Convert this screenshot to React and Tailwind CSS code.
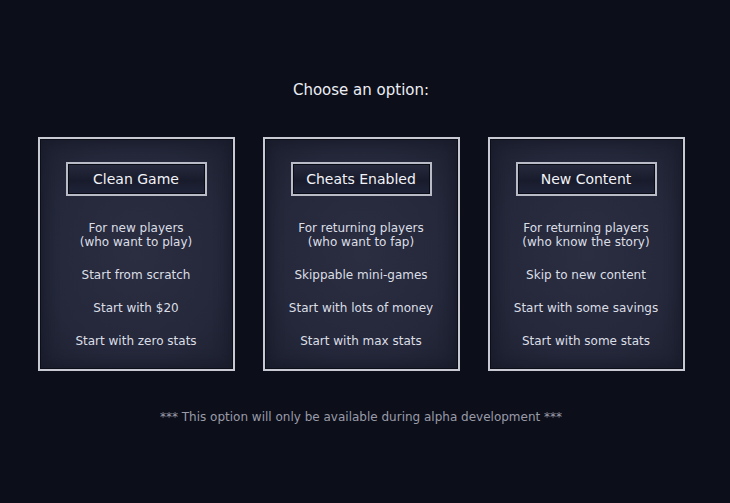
import React from "react";

const options = [
  {
    title: "Clean Game",
    lines: [
      ["For new players", "(who want to play)"],
      ["Start from scratch"],
      ["Start with $20"],
      ["Start with zero stats"],
    ],
  },
  {
    title: "Cheats Enabled",
    lines: [
      ["For returning players", "(who want to fap)"],
      ["Skippable mini-games"],
      ["Start with lots of money"],
      ["Start with max stats"],
    ],
  },
  {
    title: "New Content",
    lines: [
      ["For returning players", "(who know the story)"],
      ["Skip to new content"],
      ["Start with some savings"],
      ["Start with some stats"],
    ],
  },
];

function OptionCard({ title, lines }) {
  return (
    <div className="w-[197px] h-[234px] border-2 border-[#c8c9d2] shadow-[inset_0_0_0_1px_#0d0f18,inset_0_0_14px_4px_#181b2a] bg-[radial-gradient(ellipse_at_center,#2a2e40_0%,#24283a_65%,#1d2030_100%)] flex flex-col items-center pt-[23px]">
      <button className="w-[141px] h-[34px] border-2 border-[#b9bbc6] shadow-[inset_0_0_0_1px_#0a0c15] bg-[linear-gradient(180deg,#262a3d_0%,#181b2b_55%,#20243a_100%)] text-[14px] text-[#f2f3f8] flex items-center justify-center">
        {title}
      </button>
      <div className="mt-[25px] flex flex-col items-center gap-[19px] text-[12px] leading-[14px] text-[#dcdee6]">
        {lines.map((group, i) => (
          <div key={i} className="flex flex-col items-center">
            {group.map((l) => (
              <span key={l}>{l}</span>
            ))}
          </div>
        ))}
      </div>
    </div>
  );
}

export default function App() {
  return (
    <div
      className="w-[730px] h-[503px] bg-[#0c0f1a] flex flex-col items-center pr-[8px]"
      style={{ fontFamily: '"DejaVu Sans", Verdana, sans-serif' }}
    >
      <h1 className="mt-[80px] text-[15px] leading-[20px] text-[#eceef4]">Choose an option:</h1>
      <div className="mt-[37px] flex gap-[28px]">
        {options.map((o) => (
          <OptionCard key={o.title} {...o} />
        ))}
      </div>
      <p className="mt-[38px] text-[12px] leading-[16px] text-[#9a9ba8]">
        *** This option will only be available during alpha development ***
      </p>
    </div>
  );
}
